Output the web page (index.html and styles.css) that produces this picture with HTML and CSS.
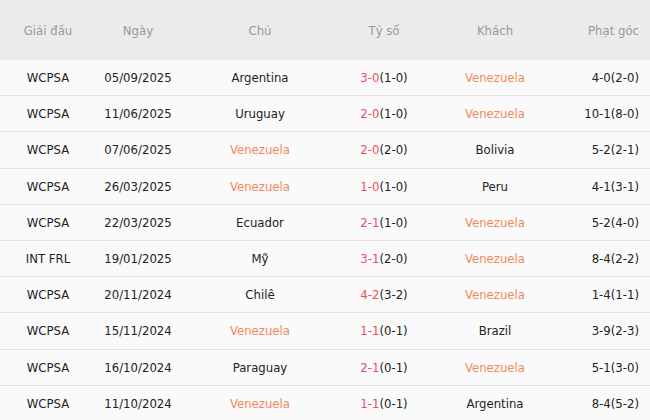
FILE: index.html
```html
<!DOCTYPE html>
<html>
<head>
<meta charset="utf-8">
<link rel="stylesheet" href="styles.css">
</head>
<body>
<table class="tbl">
  <thead>
    <tr><th class="c1">Giải đấu</th><th class="c2">Ngày</th><th class="c3">Chủ</th><th class="c4">Tỷ số</th><th class="c5">Khách</th><th class="c6">Phạt góc</th></tr>
  </thead>
  <tbody>
    <tr><td>WCPSA</td><td>05/09/2025</td><td>Argentina</td><td><span class="sc">3-0</span>(1-0)</td><td class="ve">Venezuela</td><td>4-0(2-0)</td></tr>
    <tr><td>WCPSA</td><td>11/06/2025</td><td>Uruguay</td><td><span class="sc">2-0</span>(1-0)</td><td class="ve">Venezuela</td><td>10-1(8-0)</td></tr>
    <tr><td>WCPSA</td><td>07/06/2025</td><td class="ve">Venezuela</td><td><span class="sc">2-0</span>(2-0)</td><td>Bolivia</td><td>5-2(2-1)</td></tr>
    <tr><td>WCPSA</td><td>26/03/2025</td><td class="ve">Venezuela</td><td><span class="sc">1-0</span>(1-0)</td><td>Peru</td><td>4-1(3-1)</td></tr>
    <tr><td>WCPSA</td><td>22/03/2025</td><td>Ecuador</td><td><span class="sc">2-1</span>(1-0)</td><td class="ve">Venezuela</td><td>5-2(4-0)</td></tr>
    <tr><td>INT FRL</td><td>19/01/2025</td><td>Mỹ</td><td><span class="sc">3-1</span>(2-0)</td><td class="ve">Venezuela</td><td>8-4(2-2)</td></tr>
    <tr><td>WCPSA</td><td>20/11/2024</td><td>Chilê</td><td><span class="sc">4-2</span>(3-2)</td><td class="ve">Venezuela</td><td>1-4(1-1)</td></tr>
    <tr><td>WCPSA</td><td>15/11/2024</td><td class="ve">Venezuela</td><td><span class="sc">1-1</span>(0-1)</td><td>Brazil</td><td>3-9(2-3)</td></tr>
    <tr><td>WCPSA</td><td>16/10/2024</td><td>Paraguay</td><td><span class="sc">2-1</span>(0-1)</td><td class="ve">Venezuela</td><td>5-1(3-0)</td></tr>
    <tr><td>WCPSA</td><td>11/10/2024</td><td class="ve">Venezuela</td><td><span class="sc">1-1</span>(0-1)</td><td>Argentina</td><td>8-4(5-2)</td></tr>
  </tbody>
</table>
</body>
</html>
```
FILE: styles.css
```css
html, body { margin: 0; padding: 0; background: #fafafa; }
.tbl {
  width: 650px;
  border-collapse: collapse;
  table-layout: fixed;
  font-family: "DejaVu Sans Condensed", "DejaVu Sans", sans-serif;
  font-size: 13px;
  color: #222;
}
.tbl th {
  background: #ebebeb;
  color: #999;
  font-weight: normal;
  height: 60px;
  padding: 0;
  text-align: center;
}
.tbl td {
  height: 35.2px;
  padding: 0;
  text-align: center;
  border-bottom: 1px solid #e3e3e3;
}
.c1 { width: 96px; }
.c2 { width: 84px; }
.c3 { width: 160px; }
.c4 { width: 88px; }
.c5 { width: 134px; }
.c6 { width: auto; }
.tbl th.c6, .tbl td:last-child { text-align: right; padding-right: 11px; }
.sc { color: #e8505b; }
.ve { color: #f08a5d; }
```
